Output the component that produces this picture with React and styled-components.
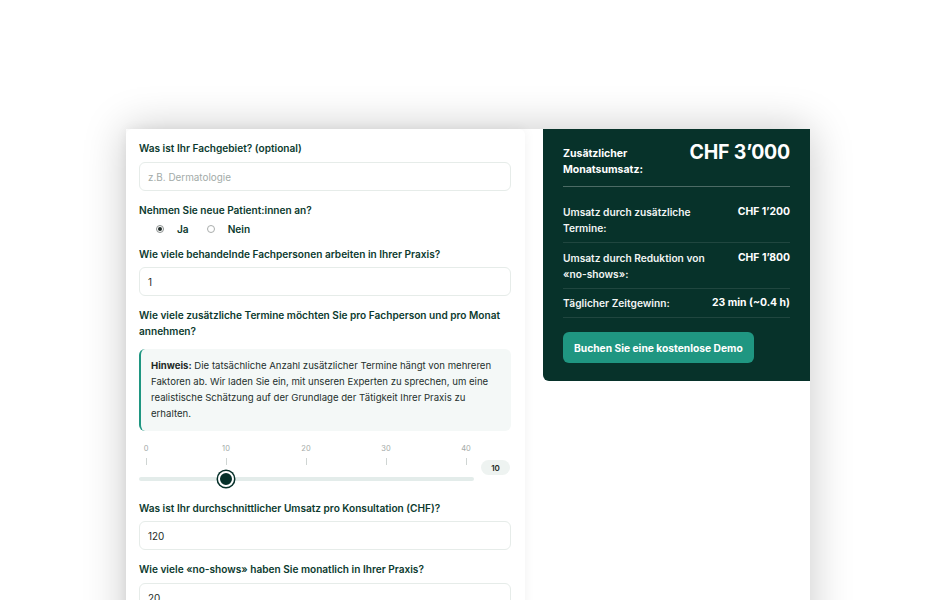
import React from 'react';
import styled, { createGlobalStyle } from 'styled-components';

const GlobalStyle = createGlobalStyle`
  html, body {
    margin: 0;
    background: #ffffff;
    font-family: Inter, "Noto Sans", "Liberation Sans", sans-serif;
    color: #0c3a2e;
    overflow: hidden;
  }
  * { box-sizing: border-box; }
`;

const Page = styled.div`
  padding: 129px 0 0 126px;
  height: 600px;
`;

const Frame = styled.div`
  width: 684px;
  min-height: 560px;
  background: #ffffff;
  box-shadow: 0 0 40px rgba(0, 0, 0, 0.22);
  display: flex;
  align-items: flex-start;
  gap: 18px;
`;

const FormCard = styled.div`
  width: 399px;
  background: #ffffff;
  border-radius: 6px;
  box-shadow: 0 0 12px rgba(0, 0, 0, 0.06);
  padding: 11px 14px 40px 13px;
  display: flex;
  flex-direction: column;
`;

const Label = styled.div`
  font-size: 10.1px;
  font-weight: 600;
  line-height: 16px;
  color: #0c3a2e;
  margin-bottom: ${p => p.$mb ?? 5}px;
`;

const Input = styled.div`
  height: 29px;
  flex-shrink: 0;
  border: 1px solid #e6ece9;
  border-radius: 6px;
  padding: 0 8px;
  display: flex;
  align-items: center;
  font-size: 9.9px;
  color: ${p => (p.$placeholder ? '#a3aba8' : '#1c2b27')};
  margin-bottom: 11px;
`;

const RadioRow = styled.div`
  display: flex;
  align-items: center;
  gap: 18px;
  padding-left: 17px;
  margin-bottom: 9px;
  height: 16px;
`;

const RadioOption = styled.label`
  display: flex;
  align-items: center;
  gap: 13px;
  font-size: 10.1px;
  font-weight: 600;
  color: #0c3a2e;
`;

const RadioDot = styled.span`
  width: 8px;
  height: 8px;
  border-radius: 50%;
  border: 1px solid ${p => (p.$checked ? '#8a8f8e' : '#a9adac')};
  background: #fff;
  display: flex;
  align-items: center;
  justify-content: center;
  &::after {
    content: '';
    width: 4px;
    height: 4px;
    border-radius: 50%;
    background: ${p => (p.$checked ? '#1f2a27' : 'transparent')};
  }
`;

const Hint = styled.div`
  background: #f4f8f7;
  border-left: 2px solid #1f9681;
  border-radius: 6px;
  padding: 9px 10px 9px 10px;
  font-size: 9.6px;
  line-height: 16px;
  color: #24302d;
  margin-bottom: 13px;
  b { font-weight: 700; color: #1d2a26; }
`;

const SliderWrap = styled.div`
  display: flex;
  align-items: flex-end;
  gap: 7px;
  margin-bottom: 19px;
`;

const SliderMain = styled.div`
  width: 335px;
  display: flex;
  flex-direction: column;
`;

const Ticks = styled.div`
  display: flex;
  justify-content: space-between;
  padding-right: 1px;
`;

const Tick = styled.div`
  width: 14px;
  display: flex;
  flex-direction: column;
  align-items: center;
  font-size: 7.5px;
  line-height: 10px;
  color: #a3aaa7;
  gap: 4px;
  &::after {
    content: '';
    width: 1px;
    height: 7px;
    background: #cfd5d3;
  }
`;

const Track = styled.div`
  position: relative;
  height: 4px;
  border-radius: 2px;
  background: #e3ecea;
  margin-top: 12px;
`;

const Thumb = styled.div`
  position: absolute;
  top: 50%;
  width: 16px;
  height: 16px;
  margin: -8px 0 0 -8px;
  border-radius: 50%;
  background: #06302a;
  border: 2px solid #ffffff;
  box-shadow: 0 0 0 1.5px #06302a;
`;

const Badge = styled.div`
  width: 29px;
  height: 15px;
  border-radius: 8px;
  background: #eef3f1;
  font-size: 8px;
  font-weight: 600;
  color: #1d2a26;
  display: flex;
  align-items: center;
  justify-content: center;
  margin-bottom: 6px;
`;

const ResultPanel = styled.div`
  width: 267px;
  background: #07322a;
  border-radius: 0 0 0 6px;
  padding: 9px 20px 18px 20px;
  color: #ffffff;
`;

const TotalRow = styled.div`
  display: flex;
  justify-content: space-between;
  align-items: flex-start;
  padding: 4px 0 8px;
  border-bottom: 1.5px solid rgba(255, 255, 255, 0.28);
`;

const TotalLabel = styled.div`
  font-size: 10.5px;
  font-weight: 700;
  line-height: 16px;
  margin-top: 4px;
`;

const TotalValue = styled.div`
  font-size: 19.5px;
  font-weight: 700;
  letter-spacing: -0.2px;
  line-height: 22px;
  margin-top: -1px;
`;

const ResultRow = styled.div`
  display: flex;
  justify-content: space-between;
  align-items: flex-start;
  gap: 12px;
  padding: ${p => (p.$first ? 17 : 6.5)}px 0 6px;
  border-bottom: 1px solid rgba(255, 255, 255, 0.1);
`;

const RowLabel = styled.div`
  font-size: 10.2px;
  font-weight: 600;
  line-height: 16px;
  max-width: 150px;
  color: #f2f5f4;
`;

const RowValue = styled.div`
  font-size: 10.4px;
  font-weight: 700;
  line-height: 16px;
  white-space: nowrap;
`;

const DemoButton = styled.button`
  margin-top: 14px;
  height: 31px;
  padding: 0 11px;
  border: none;
  border-radius: 6px;
  background: #1f9681;
  color: #ffffff;
  font-family: inherit;
  font-size: 10.25px;
  font-weight: 700;
`;

const ticks = [0, 10, 20, 30, 40];
const rows = [
  { label: 'Umsatz durch zusätzliche Termine:', value: 'CHF 1’200' },
  { label: 'Umsatz durch Reduktion von «no-shows»:', value: 'CHF 1’800' },
  { label: 'Täglicher Zeitgewinn:', value: '23 min (~0.4 h)' },
];

export default function App() {
  const value = 10;
  const thumbLeft = 7 + (value / 40) * 320;
  return (
    <>
      <GlobalStyle />
      <Page>
        <Frame>
          <FormCard>
            <Label $mb={6}>Was ist Ihr Fachgebiet? (optional)</Label>
            <Input $placeholder>z.B. Dermatologie</Input>

            <Label $mb={3}>Nehmen Sie neue Patient:innen an?</Label>
            <RadioRow>
              <RadioOption><RadioDot $checked />Ja</RadioOption>
              <RadioOption><RadioDot />Nein</RadioOption>
            </RadioRow>

            <Label>Wie viele behandelnde Fachpersonen arbeiten in Ihrer Praxis?</Label>
            <Input>1</Input>

            <Label $mb={10}>Wie viele zusätzliche Termine möchten Sie pro Fachperson und pro Monat annehmen?</Label>
            <Hint>
              <b>Hinweis:</b> Die tatsächliche Anzahl zusätzlicher Termine hängt von mehreren
              Faktoren ab. Wir laden Sie ein, mit unseren Experten zu sprechen, um eine
              realistische Schätzung auf der Grundlage der Tätigkeit Ihrer Praxis zu erhalten.
            </Hint>

            <SliderWrap>
              <SliderMain>
                <Ticks>
                  {ticks.map(t => <Tick key={t}>{t}</Tick>)}
                </Ticks>
                <Track>
                  <Thumb style={{ left: `${thumbLeft}px` }} />
                </Track>
              </SliderMain>
              <Badge>{value}</Badge>
            </SliderWrap>

            <Label>Was ist Ihr durchschnittlicher Umsatz pro Konsultation (CHF)?</Label>
            <Input>120</Input>

            <Label $mb={6}>Wie viele «no-shows» haben Sie monatlich in Ihrer Praxis?</Label>
            <Input>20</Input>
          </FormCard>

          <ResultPanel>
            <TotalRow>
              <TotalLabel>Zusätzlicher<br />Monatsumsatz:</TotalLabel>
              <TotalValue>CHF 3’000</TotalValue>
            </TotalRow>
            {rows.map((r, i) => (
              <ResultRow key={r.label} $first={i === 0}>
                <RowLabel>{r.label}</RowLabel>
                <RowValue>{r.value}</RowValue>
              </ResultRow>
            ))}
            <DemoButton>Buchen Sie eine kostenlose Demo</DemoButton>
          </ResultPanel>
        </Frame>
      </Page>
    </>
  );
}
